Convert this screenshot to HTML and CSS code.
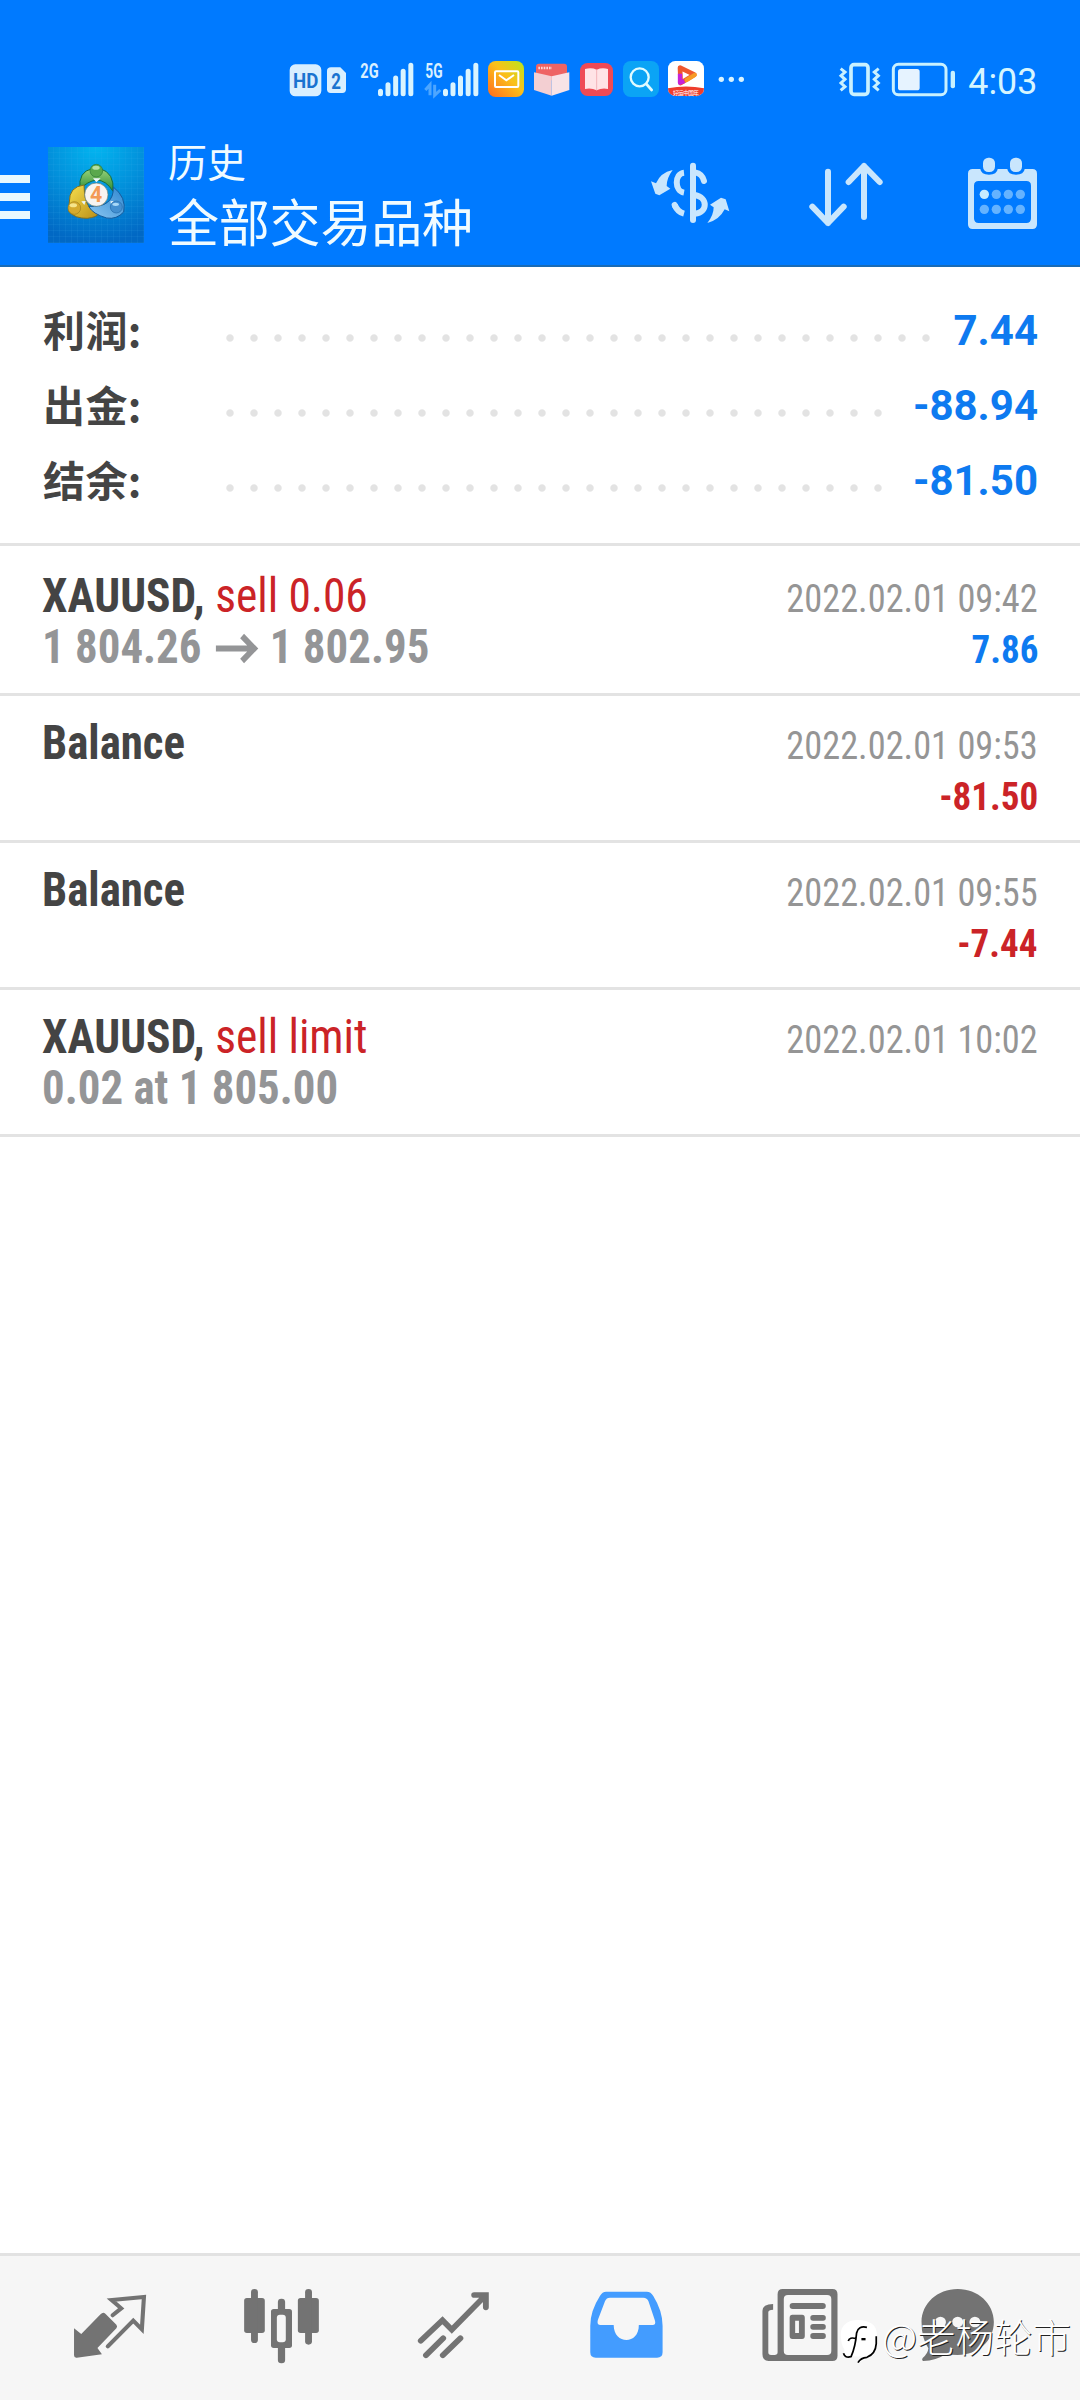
FILE: index.html
```html
<!DOCTYPE html>
<html lang="zh-CN">
<head>
<meta charset="utf-8">
<title>历史</title>
<link rel="stylesheet" href="styles.css">
</head>
<body>
<div class="screen">
  <div class="status">
    <svg width="39" height="40" viewBox="45 60 117 120"><rect x="59" y="73" width="95" height="96" rx="17" fill="#d9efff"/><text class="st-bold" x="69" y="143" font-size="58" fill="#1a73d0" textLength="76" lengthAdjust="spacingAndGlyphs">HD</text></svg>
    <svg width="27" height="40" viewBox="162 60 81 120"><path d="M183 82H211L228 99V148Q228 159 217 159H182Q171 159 171 148V93Q171 82 183 82Z" fill="#d9efff"/><text class="st-bold" x="184" y="146" font-size="68" fill="#1a73d0" textLength="29" lengthAdjust="spacingAndGlyphs">2</text></svg>
    <svg width="68" height="40" viewBox="243 60 204 120"><text class="st-bold" x="271" y="113" font-size="61" fill="#d9efff" textLength="55" lengthAdjust="spacingAndGlyphs">2G</text><path d="M331.500 154V161M354 134V161M377 114V161M399.500 94V161M422.500 76V161" class="bars"/></svg>
    <svg width="64" height="40" viewBox="447 60 192 120"><text class="st-bold" x="466" y="113" font-size="61" fill="#d9efff" textLength="52" lengthAdjust="spacingAndGlyphs">5G</text><path d="M466 150L480 134V166M494 134V166L511 150" fill="none" stroke="#4da6ff" stroke-width="9"/><path d="M526.500 154V161M549 134V161M571.500 114V161M594.500 94V161M617.500 76V161" class="bars"/></svg>
    <svg width="46" height="40" viewBox="639 60 138 120"><defs><linearGradient id="mail" x1="1" y1="0" x2="0" y2="1"><stop offset="0" stop-color="#b9e61a"/><stop offset=".45" stop-color="#fbc01a"/><stop offset="1" stop-color="#ff6a1f"/></linearGradient></defs><rect x="654" y="63" width="108" height="108" rx="23" fill="url(#mail)"/><rect x="675" y="94" width="70" height="47" rx="3" fill="none" stroke="#fff" stroke-width="6"/><path d="M687 105L709 121L732 105" fill="none" stroke="#fff" stroke-width="6"/></svg>
    <svg width="46" height="40" viewBox="27 60 138 120"><rect x="48" y="71" width="93" height="50" rx="9" fill="#ee6464"/><path d="M55 84H96" stroke="#ffd5d5" stroke-width="7" stroke-dasharray="5 3"/><path d="M42 97L95 109V167L42 150Z" fill="#f3cfd2"/><path d="M148 97L95 109V167L148 150Z" fill="#f8e3e6"/></svg>
    <svg width="43" height="40" viewBox="165 60 129 120"><rect x="180" y="69" width="99" height="99" rx="23" fill="#ef4a55"/><path d="M195 87Q215 82 230 89Q246 82 264 87V147Q246 143 230 151Q214 143 195 147Z" fill="#ffe3e6"/><path d="M230 89V151" stroke="#f3b4bb" stroke-width="3"/></svg>
    <svg width="46" height="40" viewBox="294 60 138 120"><rect x="309" y="63" width="108" height="108" rx="23" fill="#0ba4f5"/><circle cx="359" cy="112" r="27" fill="none" stroke="#e0fbff" stroke-width="7"/><path d="M379 132L395 150" stroke="#e0fbff" stroke-width="8" stroke-linecap="round"/></svg>
    <svg width="48" height="40" viewBox="432 60 144 120"><defs><clipPath id="vid"><rect x="444" y="63" width="108" height="105" rx="22"/></clipPath></defs><g clip-path="url(#vid)"><rect x="444" y="63" width="108" height="108" fill="#fff"/><path d="M444 145Q498 134 552 145V171H444Z" fill="#ee3d2c"/></g><path d="M480 83L523 104L482 129Z" fill="none" stroke="#f0582e" stroke-width="14" stroke-linejoin="round"/><path d="M480 101V128L493 123" fill="none" stroke="#c622d8" stroke-width="13" stroke-linejoin="round"/><path d="M500 120L524 105" stroke="#f79a24" stroke-width="13" stroke-linecap="round"/><text class="cjk" x="459" y="164" font-size="17" fill="#fff" textLength="78">好运中国年</text></svg>
    <svg width="44" height="40" viewBox="576 60 132 120" fill="#d9f4ff"><circle cx="604" cy="118" r="8"/><circle cx="634" cy="118" r="8"/><circle cx="664" cy="118" r="8"/></svg>
    <span class="spacer"></span>
    <svg width="52" height="40" viewBox="72 60 156 120" fill="none" stroke="#c9f1ff"><rect x="123" y="74" width="51" height="89" rx="9" stroke-width="11"/><path d="M92 86L105 96L93 107L105 118L93 129L105 140L92 151M206 86L193 96L205 107L193 118L205 129L193 140L206 151" stroke-width="9"/></svg>
    <svg width="74" height="40" viewBox="228 60 222 120"><rect x="250" y="73" width="158" height="91" rx="15" fill="none" stroke="#c9f1ff" stroke-width="9"/><rect x="264" y="87" width="65" height="64" rx="8" fill="#e6f3ff"/><rect x="422" y="92" width="13" height="53" rx="6" fill="#c9f1ff"/></svg>
    <svg width="85" height="40" viewBox="450 60 255 120"><text class="clock" x="475" y="163" font-size="111" textLength="207" lengthAdjust="spacingAndGlyphs">4:03</text></svg>
  </div>
  <header class="appbar">
    <div class="burger"><i></i><i></i><i></i></div>
    <svg class="logo" viewBox="144 51 288 288">
      <defs>
        <radialGradient id="lb" cx=".5" cy="0" r="1"><stop offset="0" stop-color="#02b5f0"/><stop offset=".5" stop-color="#0290db"/><stop offset="1" stop-color="#0168c4"/></radialGradient>
        <linearGradient id="gg" x1="0" y1="0" x2="0" y2="1"><stop offset="0" stop-color="#9bd47b"/><stop offset="1" stop-color="#2a8a34"/></linearGradient>
        <linearGradient id="gy" x1="0" y1="0" x2="1" y2="1"><stop offset="0" stop-color="#f7e04e"/><stop offset="1" stop-color="#b98d16"/></linearGradient>
        <linearGradient id="gb" x1="1" y1="0" x2="0" y2="1"><stop offset="0" stop-color="#2f87d0"/><stop offset="1" stop-color="#8cc8f2"/></linearGradient>
        <pattern id="grid" x="144" y="51" width="18" height="18" patternUnits="userSpaceOnUse"><path d="M17 0V18M0 17H18" stroke="#46b4ee" stroke-opacity=".18" stroke-width="2"/></pattern>
      </defs>
      <rect x="144" y="51" width="288" height="288" fill="url(#lb)"/><rect x="144" y="51" width="288" height="288" fill="url(#grid)"/>
      <path d="M240 178Q234 124 277 116H300Q344 128 339 184Q318 150 289 150Q262 154 240 178Z" fill="url(#gg)" stroke="#176d3b" stroke-width="3"/>
      <path d="M252 165Q207 170 208 216L206 244Q225 266 262 265Q290 262 298 250Q250 240 252 165Z" fill="url(#gy)" stroke="#826f20" stroke-width="3"/>
      <path d="M340 171Q380 202 371 246Q350 269 320 264Q278 252 266 229Q342 234 340 171Z" fill="url(#gb)" stroke="#145b9c" stroke-width="3"/>
      <path d="M279 145L289 157L302 145ZM244 214L257 213L253 225ZM331 214L342 213L334 226Z" fill="#eaf6f7"/>
      <circle cx="289" cy="122" r="19" fill="#5aa84d" stroke="#2c7937" stroke-width="2"/><ellipse cx="288" cy="113" rx="11" ry="6" fill="#b4dfa3"/>
      <circle cx="223" cy="234" r="19" fill="#d5aa2d" stroke="#9b7d1d" stroke-width="2"/><ellipse cx="220" cy="226" rx="11" ry="6" fill="#f6e58b"/>
      <circle cx="349" cy="231" r="18" fill="#438fd0" stroke="#236aa9" stroke-width="2"/><ellipse cx="347" cy="223" rx="10" ry="5" fill="#a8d8f7"/>
      <circle cx="289" cy="194" r="35" fill="#f7f4f1" stroke="#6c7f70" stroke-width="2"/>
      <text class="st-bold" x="270" y="215" font-size="64" fill="#f39a55">4</text>
    </svg>
    <div class="titles"><div class="sub">历史</div><div class="main">全部交易品种</div></div>
    <svg class="tools" width="460" height="145" viewBox="0 -30 1380 435">
      <g fill="#c9e6fd">
        <path d="M158 120Q140 144 140 168L151 176L118 196L106 191L93 154L108 160Q121 128 158 120Z"/>
        <path d="M262 279Q281 256 281 232L270 224L303 203L317 208L328 244L314 238Q298 270 262 279Z"/>
      </g>
      <g fill="none" stroke="#c9e6fd" stroke-width="18" stroke-linecap="round">
        <path d="M219 107V270"/><path d="M252 153C249 139 241 130 225 127M225 195C264 202 264 247 225 251"/>
        <path d="M192 128C163 131 163 183 192 188M192 251C177 247 169 237 164 225" stroke-linecap="butt"/><path d="M164 225L166 229"/>
        <path d="M624 125V279M577 230L624 279L671 230M732 261V108M686 156L732 108L779 156" stroke-linejoin="round"/>
      </g>
      <path fill-rule="evenodd" fill="#c9e6fd" d="M1058 117H1081Q1083 134 1107 134Q1131 134 1133 117H1162Q1164 134 1188 134Q1212 134 1214 117H1237Q1251 117 1251 131V283Q1251 297 1237 297H1058Q1044 297 1044 283V131Q1044 117 1058 117ZM1076 153Q1062 153 1062 167V265Q1062 279 1076 279H1219Q1233 279 1233 265V167Q1233 153 1219 153Z"/>
      <rect x="1089" y="83" width="36" height="43" rx="16" fill="#c9e6fd"/><rect x="1170" y="83" width="36" height="43" rx="16" fill="#c9e6fd"/>
      <circle cx="1093" cy="193" r="14" fill="#c9ecff"/>
      <g fill="#65b3ff"><circle cx="1129" cy="193" r="14"/><circle cx="1165" cy="193" r="14"/><circle cx="1201" cy="193" r="14"/><circle cx="1093" cy="238" r="14"/><circle cx="1129" cy="238" r="14"/><circle cx="1165" cy="238" r="14"/><circle cx="1201" cy="238" r="14"/></g>
    </svg>
  </header>
  <section class="summary">
    <div class="sum"><span class="label">利润:</span><span class="dots w30"></span><b>7.44</b></div>
    <div class="sum"><span class="label">出金:</span><span class="dots w28"></span><b>-88.94</b></div>
    <div class="sum"><span class="label">结余:</span><span class="dots w28"></span><b>-81.50</b></div>
  </section>
  <main>
    <div class="deal first">
      <div class="line"><span class="sym"><b>XAUUSD,</b> <em>sell 0.06</em></span><span class="date">2022.02.01 09:42</span></div>
      <div class="line"><span class="price">1 804.26 <svg class="arrow" width="45" height="29" viewBox="0 0 45 29"><path d="M0 14.500H40M28 2L41 14.500L28 27" fill="none" stroke="#949597" stroke-width="6"/></svg> 1 802.95</span><span class="amt pos">7.86</span></div>
    </div>
    <div class="deal">
      <div class="line"><span class="sym bal"><b>Balance</b></span><span class="date">2022.02.01 09:53</span></div>
      <div class="line"><span class="amt">-81.50</span></div>
    </div>
    <div class="deal">
      <div class="line"><span class="sym bal"><b>Balance</b></span><span class="date">2022.02.01 09:55</span></div>
      <div class="line"><span class="amt">-7.44</span></div>
    </div>
    <div class="deal">
      <div class="line"><span class="sym"><b>XAUUSD,</b> <em>sell limit</em></span><span class="date">2022.02.01 10:02</span></div>
      <div class="line"><span class="price">0.02 at 1 805.00</span></div>
    </div>
  </main>
  <nav class="tabs">
    <svg viewBox="69.700 48 499.500 432" preserveAspectRatio="none"><path d="M215 265L236 282L292 223Q299 215 306 221L338 254Q342 259 338 265L283 324L296 343L223 353Q215 354 215 346Z"/><path d="M327 226L352 205L324 180L418 171L412 268L387 242L313 319" class="ln" stroke-width="12"/></svg>
    <svg viewBox="569.200 48 499.500 432" preserveAspectRatio="none"><rect x="709" y="174" width="60" height="105" rx="8"/><rect x="729" y="147" width="20" height="162" rx="10"/><rect x="865" y="174" width="61" height="105" rx="8"/><rect x="886" y="147" width="20" height="167" rx="10"/><rect x="787" y="207" width="61" height="117" rx="8"/><rect x="807" y="176" width="21" height="194" rx="10"/><rect x="804" y="224" width="26" height="83" rx="9" fill="#f6f6f6"/></svg>
    <svg viewBox="1068.700 48 499.500 432" preserveAspectRatio="none"><path d="M1222 302L1285 241L1312 269L1410 166M1377 165H1411V202M1237 346L1287 295M1286 346L1337 295" class="ln" stroke-width="17"/></svg>
    <svg viewBox="0 48 499.500 432" preserveAspectRatio="none"><path fill="#439cff" fill-rule="evenodd" d="M192 155H310Q322 155 329 168Q356 213 356 257V337Q356 353 340 353H162Q146 353 146 337V257Q146 213 174 168Q181 155 192 155ZM203 173Q193 173 189 183L168 240Q164 255 176 255H214C214 315 288 315 287 255H327Q337 255 334 242L315 184Q311 173 300 173Z"/></svg>
    <svg viewBox="499.500 48 499.500 432" preserveAspectRatio="none"><path fill-rule="evenodd" d="M705 147H849Q864 147 864 163V347Q864 363 849 363H664Q646 363 646 343V213Q646 192 677 192V209Q663 209 663 217V337Q663 345 671 345H681Q690 345 690 337V163Q690 147 705 147ZM720 165Q708 165 708 177V333Q708 345 720 345H834Q846 345 846 333V177Q846 165 834 165Z"/><rect x="725" y="189" width="105" height="18" rx="9"/><path fill-rule="evenodd" d="M733 224H761Q769 224 769 233V288Q769 297 761 297H733Q725 297 725 288V233Q725 224 733 224ZM741 242V279H752V242Z"/><rect x="785" y="225" width="45" height="17" rx="8"/><rect x="785" y="252" width="45" height="17" rx="8"/><rect x="785" y="279" width="45" height="18" rx="8"/></svg>
    <svg viewBox="999 48 499.500 432" preserveAspectRatio="none"><path d="M1213 147C1272 147 1318 191 1318 246C1318 302 1272 345 1213 345Q1193 345 1178 343Q1150 362 1113 363Q1107 360 1112 353Q1126 342 1128 325Q1108 295 1108 246C1108 191 1154 147 1213 147Z"/><g fill="#f6f6f6"><circle cx="1163" cy="246" r="16"/><circle cx="1213" cy="246" r="16"/><circle cx="1263" cy="246" r="16"/></g></svg>
  </nav>
  <div class="watermark">
    <svg width="40" height="48" viewBox="868 235 116 144" preserveAspectRatio="none"><path d="M922 241C892 241 873 258 873 284Q873 315 884 330L880 352L900 346Q918 354 932 348L924 369Q976 348 978 308V284C978 257 958 241 922 241Z" fill="#fff"/><path d="M949 263Q924 257 919 280Q916 320 903 351Q885 356 881 341M895 304Q898 291 918 297M976 290V312Q974 343 949 353Q931 354 923 369" fill="none" stroke="#000" stroke-width="5"/><rect x="933" y="295" width="12" height="7"/></svg>
    <span>@老杨轮市</span>
  </div>
</div>
</body>
</html>
```
FILE: styles.css
```css
body { margin: 0; }
.screen {
  position: relative;
  width: 1080px;
  height: 2400px;
  display: flex;
  flex-direction: column;
  background: #fff;
  overflow: hidden;
  font-family: "Roboto Condensed", Roboto, "Noto Sans CJK SC", sans-serif;
}
svg { display: block; flex: none; overflow: visible; }
.status {
  height: 60px;
  padding: 60px 35px 0 285px;
  display: flex;
  background: #007aff;
}
.spacer { flex: 1; }
.st-bold { font-family: Roboto, sans-serif; font-weight: 700; }
.cjk { font-family: "Noto Sans CJK SC", sans-serif; }
.clock { font-family: Roboto, sans-serif; fill: #d6f5ff; }
.bars { fill: none; stroke: #d9f4ff; stroke-width: 15; stroke-linecap: round; }
.appbar {
  height: 145px;
  display: flex;
  background: #007aff;
  border-bottom: 2px solid #1a6bb5;
}
.burger {
  width: 30px;
  padding-top: 55px;
  display: flex;
  flex-direction: column;
  gap: 10px;
}
.burger i { height: 8px; background: #e8f8ff; }
.logo { width: 96px; height: 96px; margin: 27px 0 0 18px; }
.titles {
  width: 452px;
  padding: 12px 0 0 24px;
  color: #f0fbff;
  font-family: "Noto Sans CJK SC", sans-serif;
}
.sub { font-size: 39px; line-height: 56px; }
.main { font-size: 51px; line-height: 65px; letter-spacing: -0.2px; }
.summary {
  height: 246px;
  padding: 30px 43px 0;
  border-bottom: 3px solid #e3e3e3;
}
.sum { height: 75px; display: flex; align-items: flex-start; }
.label {
  width: 175px;
  font: 700 42px/64px "Noto Sans CJK SC", sans-serif;
  letter-spacing: 0.4px;
  color: #444;
}
.dots {
  height: 8px;
  margin-top: 37px;
  background: radial-gradient(circle at 12px 4px, #e3e3e3 3.2px, transparent 4.2px) 0 0 / 24px 8px;
}
.w30 { width: 720px; }
.w28 { width: 672px; }
.sum b {
  margin: 0 -1px 0 auto;
  font: 700 42px/68px Roboto, sans-serif;
  color: #0e7af0;
}
.deal {
  height: 123px;
  padding: 21px 42px 0 42px;
  border-bottom: 3px solid #e3e3e3;
}
.first { padding-top: 24px; }
.line {
  height: 51px;
  display: flex;
  align-items: baseline;
  line-height: 51px;
  white-space: pre;
  font-stretch: 75%;
}
/* Keeps every line on the 48px baseline, also where only the amount is present */
.line::before { content: "\200b"; width: 0; font-size: 48px; }
.sym, .price { font-size: 48px; transform: scaleX(.947); transform-origin: left; }
.sym { color: #444; }
.bal { transform: scaleX(.935); }
.sym em { font-style: normal; color: #cb2327; }
.price { font-weight: 700; color: #949597; transform: scaleX(.935); }
.arrow { display: inline-block; vertical-align: 0; margin: 0 2px 0 4px; }
.date, .amt { margin-left: auto; font-size: 39px; transform: scaleX(.932); transform-origin: right; }
.date { color: #959595; }
.amt { font-weight: 700; color: #cb2327; transform: scaleX(.95); }
.pos { color: #0e7af0; }
.tabs {
  height: 144px;
  margin-top: auto;
  padding: 0 24px;
  display: flex;
  background: #f6f6f6;
  border-top: 3px solid #e2e2e2;
}
.tabs svg { width: 172px; height: 144px; fill: #737373; }
.tabs .ln { fill: none; stroke: #737373; stroke-linecap: round; stroke-linejoin: miter; }
.watermark {
  position: absolute;
  left: 839px;
  top: 2318px;
  display: flex;
  color: #fff;
  font: 300 38.5px/34px "Noto Sans CJK SC", sans-serif;
  text-shadow: 1px 1px 0 #222;
}
.watermark span { margin-left: 3px; }
```
